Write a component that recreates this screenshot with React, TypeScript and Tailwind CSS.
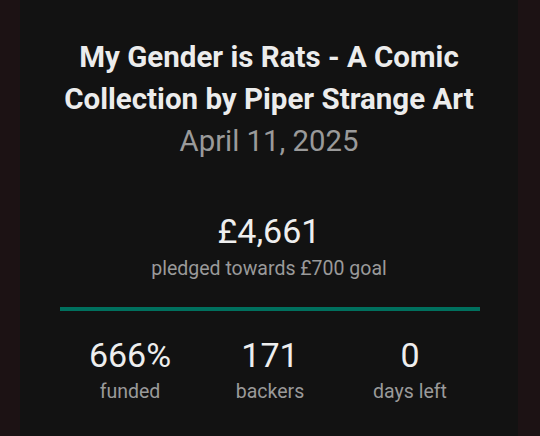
export default function App() {
  const stats = [
    { value: "666%", label: "funded" },
    { value: "171", label: "backers" },
    { value: "0", label: "days left" },
  ];

  return (
    <div className="w-[540px] h-[436px] overflow-hidden bg-[#1c1214] font-['Roboto',sans-serif]">
      <div className="ml-[20px] w-[498px] h-full bg-[#121212] pt-[36px] px-[40px]">
        <h1 className="text-[29.5px] leading-[42px] font-bold text-center text-[#ececec]">
          My Gender is Rats - A Comic
          <br />
          Collection by Piper Strange Art
        </h1>
        <p className="text-[29.3px] leading-[42px] text-center text-[#9a9a9a]">April 11, 2025</p>

        <div className="mt-[46px] text-center">
          <div className="text-[34px] leading-[47px] text-[#eeeeee]">£4,661</div>
          <div className="text-[19.5px] leading-[27px] text-[#9a9a9a]">pledged towards £700 goal</div>
        </div>

        <div className="mt-[25px] w-[420px] h-[4px] bg-[#00705e]" />

        <div className="mt-[24px] w-[420px] grid grid-cols-3 text-center">
          {stats.map(s => (
            <div key={s.label} className="flex flex-col items-center">
              <span className="text-[34px] leading-[40px] text-[#eeeeee]">{s.value}</span>
              <span className="mt-[4px] text-[19.5px] leading-[26px] text-[#9a9a9a]">{s.label}</span>
            </div>
          ))}
        </div>
      </div>
    </div>
  );
}
